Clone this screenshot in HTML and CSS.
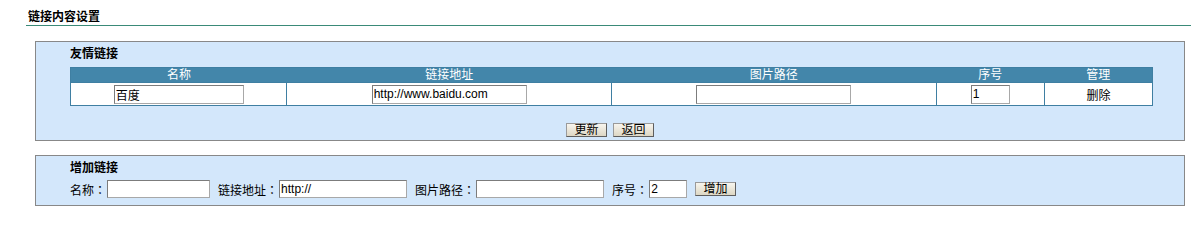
FILE: index.html
```html
<!DOCTYPE html>
<html>
<head>
<meta charset="utf-8">
<title>链接内容设置</title>
<link rel="stylesheet" href="styles.css">
</head>
<body>
<div class="page-title"><span>链接内容设置</span></div>

<div class="panel panel-list">
  <div class="panel-head">友情链接</div>
  <table class="link-table">
    <colgroup>
      <col class="c-name"><col class="c-url"><col class="c-img"><col class="c-seq"><col class="c-op">
    </colgroup>
    <thead>
      <tr><th>名称</th><th>链接地址</th><th>图片路径</th><th>序号</th><th>管理</th></tr>
    </thead>
    <tbody>
      <tr>
        <td><input class="in in-name" type="text" value="百度"></td>
        <td><input class="in in-url" type="text" value="http://www.baidu.com"></td>
        <td><input class="in in-img" type="text" value=""></td>
        <td><input class="in in-seq" type="text" value="1"></td>
        <td><a class="op">删除</a></td>
      </tr>
    </tbody>
  </table>
  <div class="actions">
    <button class="btn">更新</button>
    <button class="btn">返回</button>
  </div>
</div>

<div class="panel panel-add">
  <div class="panel-head">增加链接</div>
  <div class="add-row">
    <label class="lbl">名称<span class="colon">：</span></label><input class="in a-name" type="text" value="">
    <label class="lbl">链接地址<span class="colon">：</span></label><input class="in a-url" type="text" value="http://">
    <label class="lbl">图片路径<span class="colon">：</span></label><input class="in a-img" type="text" value="">
    <label class="lbl">序号<span class="colon">：</span></label><input class="in a-seq" type="text" value="2">
    <button class="btn btn-add">增加</button>
  </div>
</div>
</body>
</html>
```
FILE: styles.css
```css
html, body {
  margin: 0;
  padding: 0;
  background: #ffffff;
}
body {
  font-family: "Liberation Sans", "Noto Sans CJK SC", sans-serif;
  font-size: 12px;
  color: #000;
}
.page-title {
  margin-left: 26px;
  width: 1165px;
  padding-top: 9px;
  line-height: 16px;
  border-bottom: 1px solid #3a8a78;
}
.page-title span {
  padding-left: 2px;
  font-weight: bold;
}
.panel {
  margin-left: 35px;
  width: 1148px;
  background: #d3e7fb;
  border: 1px solid #888888;
  box-sizing: content-box;
}
.panel-list {
  margin-top: 15px;
  padding: 4px 0 4px 0;
  height: 90px;
}
.panel-head {
  padding-left: 34px;
  font-weight: bold;
  line-height: 16px;
}
.link-table {
  margin: 5px 0 0 34px;
  width: 1083px;
  border-collapse: collapse;
  table-layout: fixed;
}
.c-name { width: 20%; }
.c-url { width: 30%; }
.c-img { width: 30%; }
.c-seq { width: 10%; }
.c-op { width: 10%; }
.link-table th {
  background: #4386aa;
  color: #ffffff;
  font-weight: normal;
  height: 14px;
  line-height: 14px;
  padding: 0;
  border: 1px solid #3f7fa2;
  border-left: none;
  border-right: none;
}
.link-table th:first-child { border-left: 1px solid #3f7fa2; }
.link-table th:last-child { border-right: 1px solid #3f7fa2; }
.link-table td {
  background: #ffffff;
  border: 1px solid #3f7fa2;
  text-align: center;
  height: 22px;
  padding: 0;
}
.in {
  box-sizing: border-box;
  height: 19px;
  margin: 0;
  padding: 0 1px;
  border: 1px solid #868686;
  border-color: #7c7c7c #a8a8a8 #a8a8a8 #7c7c7c;
  background: #ffffff;
  font-family: "Liberation Sans", "Noto Sans CJK SC", sans-serif;
  font-size: 12px;
  color: #000;
  vertical-align: middle;
}
.in-name { width: 130px; }
.in-url { width: 155px; }
.in-img { width: 155px; }
.in-seq { width: 39px; }
.op {
  color: #000;
  text-decoration: none;
}
.actions {
  display: flex;
  justify-content: center;
  gap: 6px;
  margin-top: 17px;
}
.btn {
  box-sizing: border-box;
  height: 14px;
  width: 41px;
  padding: 0;
  margin: 0;
  border: 1px solid #7a7a7a;
  border-color: #9a9a9a #5e5e5e #5e5e5e #9a9a9a;
  background: linear-gradient(#f7f5ee, #ddd7c4);
  font-family: "Liberation Sans", "Noto Sans CJK SC", sans-serif;
  font-size: 12px;
  line-height: 12px;
  color: #000;
}
.panel-add {
  margin-top: 14px;
  padding: 4px 0 5px 0;
  height: 40px;
}
.add-row {
  display: flex;
  align-items: center;
  padding-left: 34px;
  margin-top: 3px;
  height: 20px;
}
.lbl {
  white-space: nowrap;
  margin-right: 1px;
}
.colon {
  font-family: "Noto Sans CJK TC", "Noto Sans CJK SC", sans-serif;
}
.add-row .in {
  height: 18px;
  margin-right: 8px;
}
.a-name { width: 103px; }
.a-url { width: 128px; }
.a-img { width: 128px; }
.a-seq { width: 38px; }
.btn-add {
  height: 14px;
}
```
